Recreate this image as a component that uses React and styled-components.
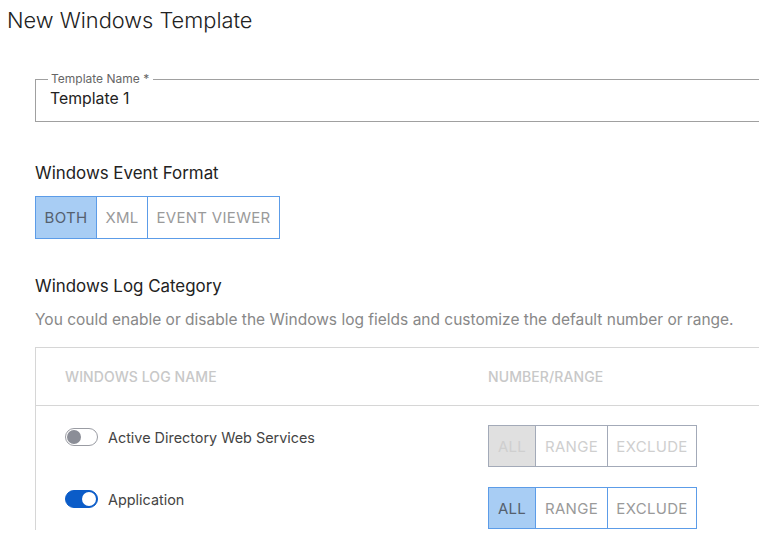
import React from "react";
import styled, { createGlobalStyle } from "styled-components";

const Global = createGlobalStyle`
  html, body { margin: 0; padding: 0; background: #fff; }
  body { font-family: Inter, "Noto Sans", sans-serif; overflow: hidden; }
  * { box-sizing: border-box; }
`;

const Page = styled.div`
  width: 759px;
  height: 533px;
  overflow: hidden;
  position: relative;
`;

const Title = styled.h1`
  margin: 0;
  padding: 8px 0 0 7px;
  font-size: 21.8px;
  font-weight: 300;
  line-height: 24px;
  color: #222;
`;

const Body = styled.div`
  padding: 0 0 0 35px;
  width: 1000px;
`;

const Field = styled.fieldset`
  margin: 47px 0 0 0;
  padding: 0 14px 0 14px;
  border: 1px solid #a0a0a0;
  border-radius: 0;
  height: 50px;
  width: 900px;
  position: relative;
  top: -7px;
`;

const Legend = styled.legend`
  padding: 0 4px 0 3px;
  margin-left: -2px;
  font-size: 12px;
  line-height: 14px;
  color: #666;
`;

const Value = styled.div`
  font-size: 15.8px;
  line-height: 20px;
  color: #222;
  margin-top: 3px;
`;

const SectionTitle = styled.h2`
  margin: ${(p) => p.$mt}px 0 0 0;
  font-size: 16.9px;
  font-weight: 400;
  line-height: 20px;
  color: #222;
`;

const Desc = styled.p`
  margin: 14px 0 0 0;
  font-size: 15.5px;
  line-height: 20px;
  color: #888;
`;

const Group = styled.div`
  display: inline-flex;
  margin-top: ${(p) => p.$mt || 0}px;
  border: 1px solid ${(p) => (p.$disabled ? "#a3aab8" : "#5c9ce8")};
  border-left-width: 0;
  height: ${(p) => p.$h}px;
`;

const Seg = styled.div`
  display: flex;
  align-items: center;
  justify-content: center;
  width: ${(p) => p.$w}px;
  font-size: 15px;
  letter-spacing: 0.3px;
  border-left: 1px solid ${(p) => (p.$disabled ? "#a3aab8" : "#5c9ce8")};
  background: ${(p) =>
    p.$active ? (p.$disabled ? "#e0e0e0" : "#a8cdf4") : "#fff"};
  color: ${(p) =>
    p.$disabled ? "#cfcfcf" : p.$active ? "#55606e" : "#9a9a9a"};
`;

const Table = styled.div`
  margin-top: 17px;
  border-top: 1px solid #d6d6d6;
  border-left: 1px solid #d6d6d6;
  width: 900px;
`;

const HeadRow = styled.div`
  display: grid;
  grid-template-columns: 423px 1fr;
  height: 58px;
  align-items: center;
  border-bottom: 1px solid #d6d6d6;
  padding-left: 29px;
`;

const HeadCell = styled.div`
  font-size: 14px;
  font-weight: 500;
  color: #c8c8c8;
  letter-spacing: 0.1px;
`;

const Row = styled.div`
  display: grid;
  grid-template-columns: 423px 1fr;
  align-items: start;
  padding-left: 29px;
  height: 62px;
`;

const NameCell = styled.div`
  display: flex;
  align-items: center;
  gap: 10px;
  height: 20px;
  margin-top: 21px;
  font-size: 14.4px;
  color: #444;
`;

const Toggle = styled.span`
  position: relative;
  width: 33px;
  height: 18px;
  border-radius: 9px;
  background: ${(p) => (p.$on ? "#0b5cc8" : "#fff")};
  border: 1px solid ${(p) => (p.$on ? "#0b5cc8" : "#9a9ca3")};
  flex: none;
  &::after {
    content: "";
    position: absolute;
    top: 1px;
    left: ${(p) => (p.$on ? "16px" : "1px")};
    width: 14px;
    height: 14px;
    border-radius: 50%;
    background: ${(p) => (p.$on ? "#fff" : "#8b8e97")};
  }
`;

const RangeCell = styled.div`
  display: flex;
  margin-top: 19px;
`;

const SEGS = [
  ["ALL", 47],
  ["RANGE", 72],
  ["EXCLUDE", 89],
];

function RangeGroup({ disabled }) {
  return (
    <Group $disabled={disabled} $h={42}>
      {SEGS.map(([t, w], i) => (
        <Seg key={t} $w={w} $active={i === 0} $disabled={disabled}>
          {t}
        </Seg>
      ))}
    </Group>
  );
}

export default function App() {
  return (
    <Page>
      <Global />
      <Title>New Windows Template</Title>
      <Body>
        <Field>
          <Legend>Template Name *</Legend>
          <Value>Template 1</Value>
        </Field>
        <SectionTitle $mt={34}>Windows Event Format</SectionTitle>
        <Group $mt={13} $h={43}>
          <Seg $w={61} $active>BOTH</Seg>
          <Seg $w={51}>XML</Seg>
          <Seg $w={132}>EVENT VIEWER</Seg>
        </Group>
        <SectionTitle $mt={37}>Windows Log Category</SectionTitle>
        <Desc>You could enable or disable the Windows log fields and customize the default number or range.</Desc>
        <Table>
          <HeadRow>
            <HeadCell>WINDOWS LOG NAME</HeadCell>
            <HeadCell>NUMBER/RANGE</HeadCell>
          </HeadRow>
          <Row>
            <NameCell>
              <Toggle />
              Active Directory Web Services
            </NameCell>
            <RangeCell>
              <RangeGroup disabled />
            </RangeCell>
          </Row>
          <Row>
            <NameCell>
              <Toggle $on />
              Application
            </NameCell>
            <RangeCell>
              <RangeGroup />
            </RangeCell>
          </Row>
        </Table>
      </Body>
    </Page>
  );
}
